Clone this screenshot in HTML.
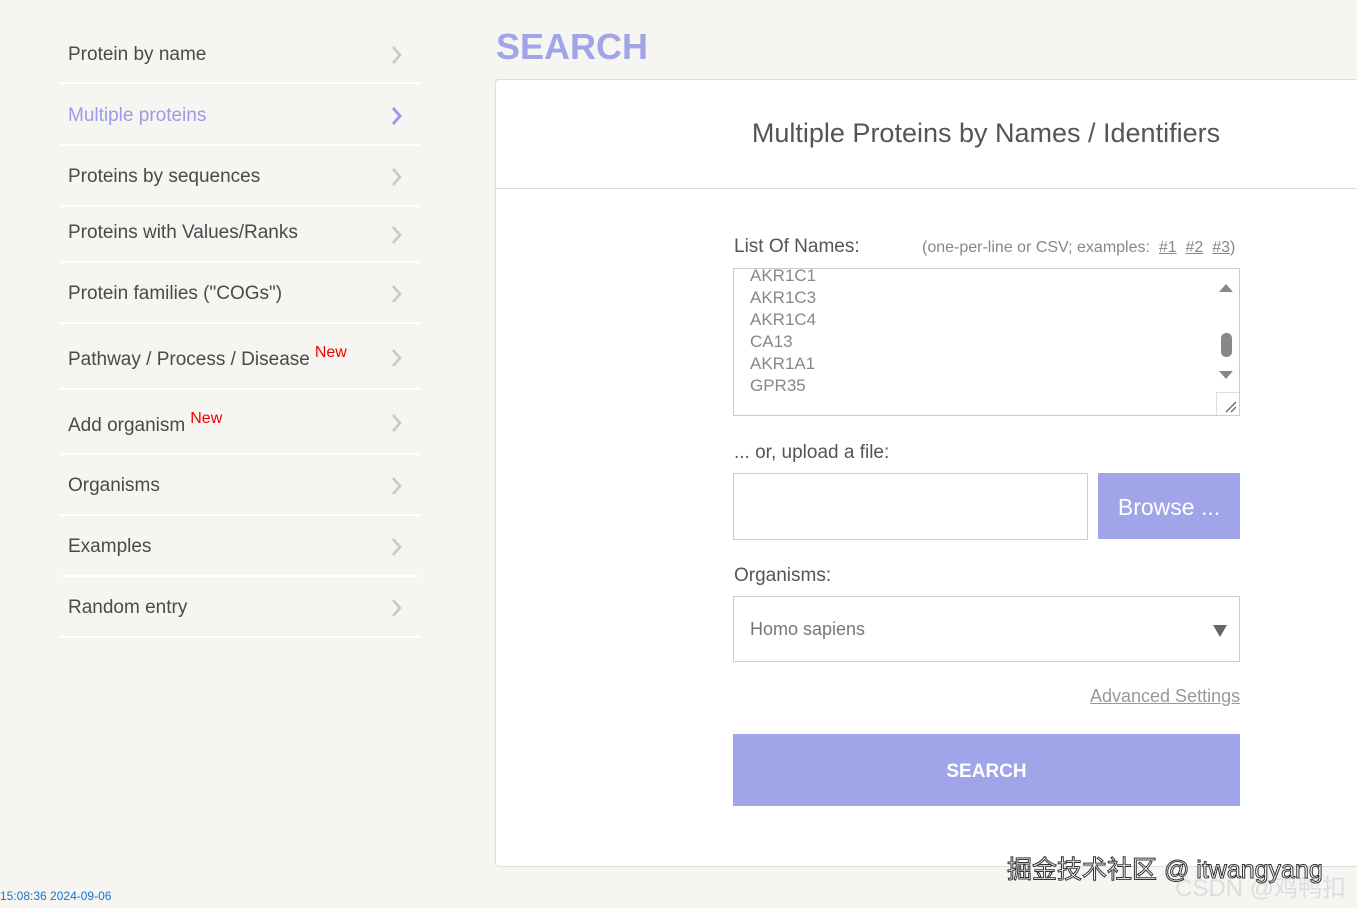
<!DOCTYPE html>
<html><head><meta charset="utf-8"><style>
body{margin:0;width:1357px;height:908px;background:#f6f5f2;font-family:"Liberation Sans",Arial,sans-serif;position:relative;overflow:hidden;color:#555}
.mi{position:absolute;left:68px;font-size:19px;color:#4a4a4a;line-height:22px}
.div{position:absolute;left:60px;width:360px;height:2px;background:#fff}
.chev{position:absolute;left:388px}
.new{color:#e00;font-size:16px;position:relative;top:-8px;margin-left:5px}
.a{position:absolute}
</style></head><body>
<div class="mi" style="top:44px">Protein by name</div>
<div class="mi" style="top:105px;color:#9b9be6">Multiple proteins</div>
<div class="mi" style="top:166px">Proteins by sequences</div>
<div class="mi" style="top:222px">Proteins with Values/Ranks</div>
<div class="mi" style="top:283px">Protein families ("COGs")</div>
<div class="mi" style="top:349px">Pathway / Process / Disease<span class="new">New</span></div>
<div class="mi" style="top:415px">Add organism<span class="new">New</span></div>
<div class="mi" style="top:475px">Organisms</div>
<div class="mi" style="top:536px">Examples</div>
<div class="mi" style="top:597px">Random entry</div>
<div class="div" style="top:82px"></div><div class="div" style="top:144px"></div><div class="div" style="top:205px"></div><div class="div" style="top:261px"></div><div class="div" style="top:322px"></div><div class="div" style="top:388px"></div><div class="div" style="top:453px"></div><div class="div" style="top:514px"></div><div class="div" style="top:575px"></div><div class="div" style="top:636px"></div>
<svg class="chev" style="top:44px" width="18" height="22"><path d="M5 3l7 8-7 8" fill="none" stroke="#c8c8c8" stroke-width="2.5"/></svg>
<svg class="chev" style="top:105px" width="18" height="22"><path d="M5 3l7 8-7 8" fill="none" stroke="#9b9be6" stroke-width="3"/></svg>
<svg class="chev" style="top:166px" width="18" height="22"><path d="M5 3l7 8-7 8" fill="none" stroke="#c8c8c8" stroke-width="2.5"/></svg>
<svg class="chev" style="top:224px" width="18" height="22"><path d="M5 3l7 8-7 8" fill="none" stroke="#c8c8c8" stroke-width="2.5"/></svg>
<svg class="chev" style="top:283px" width="18" height="22"><path d="M5 3l7 8-7 8" fill="none" stroke="#c8c8c8" stroke-width="2.5"/></svg>
<svg class="chev" style="top:347px" width="18" height="22"><path d="M5 3l7 8-7 8" fill="none" stroke="#c8c8c8" stroke-width="2.5"/></svg>
<svg class="chev" style="top:412px" width="18" height="22"><path d="M5 3l7 8-7 8" fill="none" stroke="#c8c8c8" stroke-width="2.5"/></svg>
<svg class="chev" style="top:475px" width="18" height="22"><path d="M5 3l7 8-7 8" fill="none" stroke="#c8c8c8" stroke-width="2.5"/></svg>
<svg class="chev" style="top:536px" width="18" height="22"><path d="M5 3l7 8-7 8" fill="none" stroke="#c8c8c8" stroke-width="2.5"/></svg>
<svg class="chev" style="top:597px" width="18" height="22"><path d="M5 3l7 8-7 8" fill="none" stroke="#c8c8c8" stroke-width="2.5"/></svg>

<div class="a" style="left:496px;top:26px;font-size:36px;font-weight:bold;color:#a0a4e8">SEARCH</div>
<div class="a" style="left:495px;top:79px;width:880px;height:786px;background:#fff;border:1px solid #ddd;border-radius:4px"></div>
<div class="a" style="left:496px;top:188px;width:861px;height:1px;background:#ddd"></div>
<div class="a" style="left:496px;top:118px;width:980px;text-align:center;font-size:27px;color:#555">Multiple Proteins by Names / Identifiers</div>

<div class="a" style="left:734px;top:236px;font-size:19px;color:#555">List Of Names:</div>
<div class="a" style="left:922px;top:239px;font-size:16px;color:#888">(one-per-line or CSV; examples:&nbsp; <u>#1</u>&nbsp; <u>#2</u>&nbsp; <u>#3</u>)</div>
<div class="a" style="left:733px;top:268px;width:505px;height:146px;border:1px solid #ccc;background:#fff;overflow:hidden">
<div style="position:absolute;left:16px;top:-4px;font-size:17px;line-height:22px;color:#888">AKR1C1<br>AKR1C3<br>AKR1C4<br>CA13<br>AKR1A1<br>GPR35</div>
<svg style="position:absolute;left:484px;top:10px" width="16" height="110"><path d="M1 13L8 5 15 13z" fill="#888"/><rect x="3" y="54" width="11" height="24" rx="5" fill="#888"/><path d="M1 92L8 100 15 92z" fill="#888"/></svg>
<div style="position:absolute;left:482px;top:123px;width:23px;height:23px;border-left:1px solid #ddd;border-top:1px solid #ddd"></div>
<svg style="position:absolute;left:490px;top:131px" width="14" height="14"><path d="M2 12L12 2M7 12L12 7" stroke="#666" stroke-width="1.3"/></svg>
</div>

<div class="a" style="left:734px;top:442px;font-size:19px;color:#555">... or, upload a file:</div>
<div class="a" style="left:733px;top:473px;width:353px;height:65px;border:1px solid #ccc;background:#fff"></div>
<div class="a" style="left:1098px;top:473px;width:142px;height:66px;background:#a0a4e8;color:#fff;font-size:23px;line-height:68px;text-align:center">Browse ...</div>

<div class="a" style="left:734px;top:565px;font-size:19px;color:#555">Organisms:</div>
<div class="a" style="left:733px;top:596px;width:505px;height:64px;border:1px solid #ccc;background:#fff"></div>
<div class="a" style="left:750px;top:619px;font-size:18px;color:#777">Homo sapiens</div>
<svg class="a" style="left:1213px;top:624px" width="14" height="13"><path d="M0 1h14L7 13z" fill="#666"/></svg>

<div class="a" style="left:1090px;top:686px;font-size:18px;color:#999;text-decoration:underline">Advanced Settings</div>
<div class="a" style="left:733px;top:734px;width:507px;height:72px;background:#a0a4e8;color:#fff;font-size:19px;font-weight:bold;line-height:76px;text-align:center">SEARCH</div>

<div class="a" style="left:1175px;top:868px;font-size:24px;color:#ddd;font-family:'Liberation Sans','Noto Sans CJK SC',sans-serif">CSDN @鸡鸭扣</div>
<div class="a" style="left:1007px;top:850px;font-size:25px;color:#fff;-webkit-text-stroke:1px #333;font-family:'Liberation Sans','Noto Sans CJK SC',sans-serif">掘金技术社区 @ itwangyang</div>
<div class="a" style="left:0;top:889px;font-size:12px;color:#1a73c8">15:08:36 2024-09-06</div>
</body></html>
